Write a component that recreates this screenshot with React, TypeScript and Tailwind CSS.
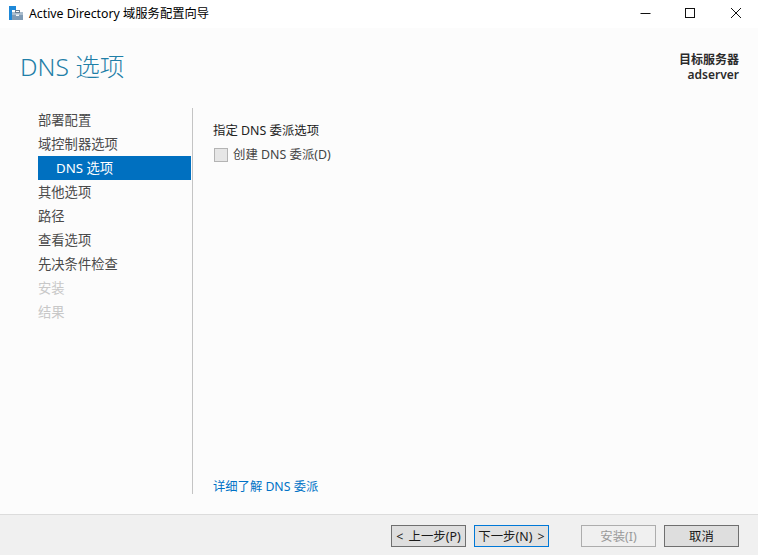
const font = "font-['Noto_Sans','Noto_Sans_CJK_SC',sans-serif]";

function Btn({ label, kind }: { label: string; kind?: "focus" | "disabled" }) {
  const cls =
    kind === "focus"
      ? "border-[#0078d7] bg-[#e1e1e1] text-[#1a1a1a]"
      : kind === "disabled"
      ? "border-[#adadad] bg-[#f0f0f0] text-[#9a9a9a]"
      : "border-[#6f6f6f] bg-[#dedede] text-[#1a1a1a]";
  return (
    <button className={`h-[22px] w-[75px] whitespace-nowrap border pt-[2px] text-[12.4px] leading-none [word-spacing:2px] ${cls}`}>{label}</button>
  );
}

const nav = ["部署配置", "域控制器选项", "DNS 选项", "其他选项", "路径", "查看选项", "先决条件检查", "安装", "结果"];

export default function App() {
  return (
    <div className={`${font} flex h-[555px] w-[758px] flex-col overflow-hidden bg-[#fcfcfc] text-[12px] text-[#1e1e1e]`}>
      <div className="flex h-[28px] items-center bg-white pl-[9px]">
        <svg width="15" height="15" viewBox="0 0 15 15" className="mb-[3px]">
          <rect x="0" y="1" width="7" height="4" fill="#1e88d8" />
          <rect x="0" y="5" width="3" height="10" fill="#1e88d8" />
          <rect x="3" y="7" width="11" height="8" fill="#7f9bb5" />
          <rect x="3" y="7" width="11" height="3" fill="#a9bccd" />
          <rect x="6.5" y="5.5" width="4" height="2" fill="none" stroke="#6b7f93" strokeWidth="1" />
          <rect x="7" y="9.5" width="3" height="1.5" fill="#f2f5f8" />
        </svg>
        <span className="ml-[5px] text-[12.3px] text-black">Active Directory 域服务配置向导</span>
        <div className="ml-auto flex items-center">
          <svg width="12" height="12" viewBox="0 0 12 12" className="mb-[2px] mr-[32px]">
            <path d="M0.5 6.5 H10.5" stroke="#111" strokeWidth="1" />
          </svg>
          <svg width="12" height="12" viewBox="0 0 12 12" className="mb-[2px] mr-[34px]">
            <rect x="1.5" y="1.5" width="9" height="9" fill="none" stroke="#111" strokeWidth="1" />
          </svg>
          <svg width="12" height="12" viewBox="0 0 12 12" className="mb-[2px] mr-[16px]">
            <path d="M1 1 L11 11 M11 1 L1 11" stroke="#111" strokeWidth="1" />
          </svg>
        </div>
      </div>

      <div className="flex h-[80px] items-start justify-between pl-[20px] pr-[19px]">
        <div className="mt-[21px] text-[24.6px] font-light leading-[36px] text-[#1f7fa8]">DNS 选项</div>
        <div className="mt-[24px] text-right text-[12px] font-semibold leading-[15px] text-[#2b2b2b]">
          <div>目标服务器</div>
          <div>adserver</div>
        </div>
      </div>

      <div className="flex h-[386px]">
        <div className="ml-[38px] w-[153px]">
          {nav.map((n, i) => (
            <div
              key={n}
              className={`flex h-[24px] items-center pt-[2px] text-[13.3px] ${
                i === 2 ? "bg-[#0070c0] pl-[18px] text-white" : i > 6 ? "text-[#c8c8c8]" : "text-[#4a4a4a]"
              }`}
            >
              {n}
            </div>
          ))}
        </div>
        <div className="ml-[1px] h-full w-px bg-[#c4c4c4]" />
        <div className="flex flex-1 flex-col pl-[20px] text-[12.4px]">
          <div className="mt-[14px] h-[18px] leading-[18px] text-[#222]">指定 DNS 委派选项</div>
          <div className="mt-[8px] flex h-[14px] items-center">
            <span className="ml-[1px] h-[14px] w-[14px] border border-[#b4b4b4] bg-[#e6e6e6]" />
            <span className="ml-[5px] text-[#444]">创建 DNS 委派(D)</span>
          </div>
          <div className="mb-[-1px] mt-auto h-[16px] text-[12.3px] leading-[16px] text-[#0072c6]">详细了解 DNS 委派</div>
        </div>
      </div>

      <div className="mt-[20px] flex flex-1 items-start gap-[8px] border-t border-[#dcdcdc] bg-[#f0f0f0] pl-[391px] pt-[10px]">
        <Btn label="< 上一步(P)" />
        <Btn label="下一步(N) >" kind="focus" />
        <div className="ml-[24px]">
          <Btn label="安装(I)" kind="disabled" />
        </div>
        <Btn label="取消" />
      </div>
    </div>
  );
}
